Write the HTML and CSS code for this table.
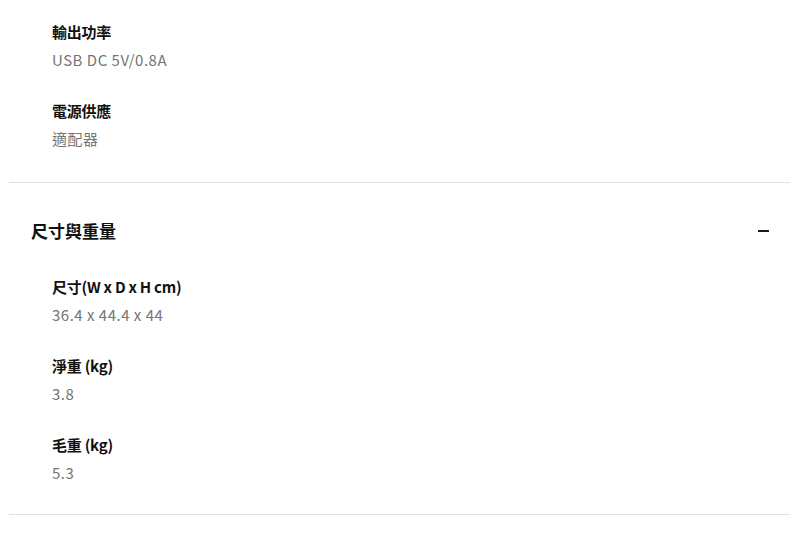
FILE: index.html
```html
<!DOCTYPE html>
<html lang="zh-Hant">
<head>
<meta charset="utf-8">
<link rel="stylesheet" href="styles.css">
</head>
<body>
<div class="page">
  <section class="section first">
    <div class="items">
      <div class="item">
        <div class="label">輸出功率</div>
        <div class="value">USB DC 5V/0.8A</div>
      </div>
      <div class="item">
        <div class="label">電源供應</div>
        <div class="value">適配器</div>
      </div>
    </div>
  </section>
  <section class="section">
    <div class="header">
      <h2 class="title">尺寸與重量</h2>
      <span class="minus"></span>
    </div>
    <div class="items">
      <div class="item">
        <div class="label">尺寸(W x D x H cm)</div>
        <div class="value">36.4 x 44.4 x 44</div>
      </div>
      <div class="item">
        <div class="label">淨重 (kg)</div>
        <div class="value">3.8</div>
      </div>
      <div class="item">
        <div class="label">毛重 (kg)</div>
        <div class="value">5.3</div>
      </div>
    </div>
  </section>
</div>
</body>
</html>
```

FILE: styles.css
```css
* { box-sizing: border-box; }
html, body {
  margin: 0;
  padding: 0;
  background: #ffffff;
}
body {
  font-family: "Noto Sans CJK TC", "Noto Sans", sans-serif;
  color: #111111;
}
.page {
  padding: 0 10px 0 9px;
}
.section {
  border-bottom: 1px solid #e0e0e0;
}
.section.first .items {
  padding-top: 18px;
  padding-bottom: 29px;
}
.header {
  display: flex;
  align-items: center;
  justify-content: space-between;
  padding: 34px 21px 0 22px;
  height: 62px;
}
.title {
  margin: 0;
  font-size: 17px;
  line-height: 28px;
  font-weight: 700;
  color: #111111;
}
.minus {
  width: 11px;
  height: 2px;
  background: #1a1a1a;
  margin-top: -1px;
}
.items {
  display: flex;
  flex-direction: column;
  gap: 23px;
  padding: 28px 0 27px 43px;
}
.item {
  display: flex;
  flex-direction: column;
}
.label {
  font-size: 15px;
  line-height: 28px;
  font-weight: 700;
  letter-spacing: -0.25px;
  color: #111111;
}
.value {
  font-size: 15px;
  line-height: 28px;
  letter-spacing: 0.5px;
  color: #757575;
}
```
